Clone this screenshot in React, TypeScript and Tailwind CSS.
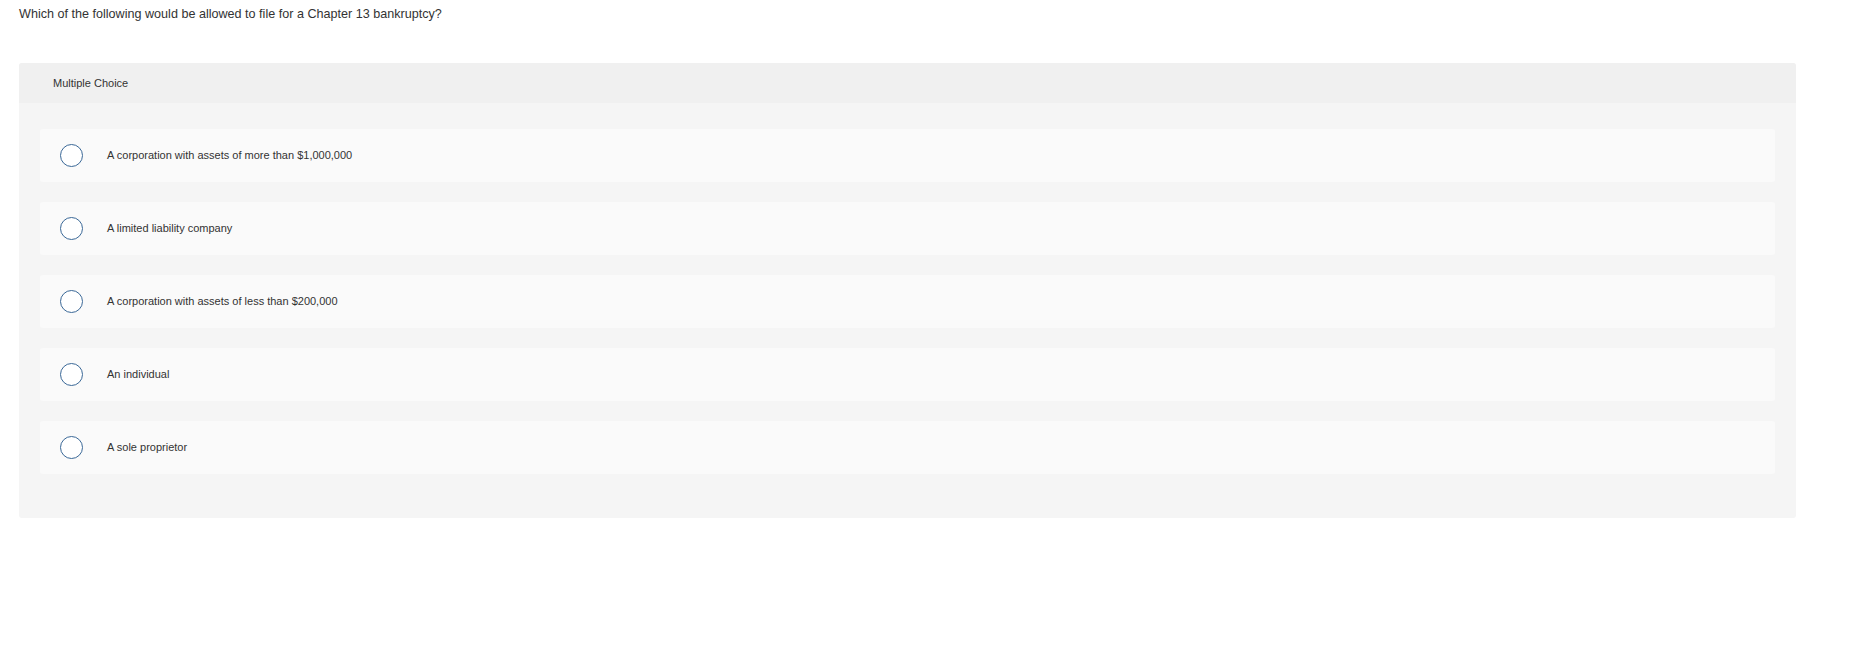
import React from 'react';

const OPTIONS = [
  'A corporation with assets of more than $1,000,000',
  'A limited liability company',
  'A corporation with assets of less than $200,000',
  'An individual',
  'A sole proprietor',
];

const App: React.FC = () => {
  return (
    <div className="min-h-[645px] w-full bg-white font-['Liberation_Sans',Arial,sans-serif] text-[#333]">
      <div className="px-[19px] pt-[6px] text-[12.6px] leading-[16px]">
        Which of the following would be allowed to file for a Chapter 13 bankruptcy?
      </div>

      <div className="ml-[19px] mt-[41px] w-[1777px] overflow-hidden rounded-[3px] bg-[#f5f5f5]">
        {/* Header */}
        <div className="flex h-[40px] items-center bg-[#f0f0f0] pl-[34px] text-[11px]">
          Multiple Choice
        </div>

        {/* Options */}
        <div className="flex flex-col gap-[20px] px-[21px] pt-[26px] pb-[44px]">
          {OPTIONS.map((opt) => (
            <label
              key={opt}
              className="flex h-[53px] cursor-pointer items-center rounded-[3px] bg-[#fafafa] pl-[20px]"
            >
              <span className="h-[23px] w-[23px] shrink-0 rounded-full border-[1.5px] border-[#3a6897] bg-white" />
              <span className="ml-[24px] text-[11px]">{opt}</span>
            </label>
          ))}
        </div>
      </div>
    </div>
  );
};

export default App;
